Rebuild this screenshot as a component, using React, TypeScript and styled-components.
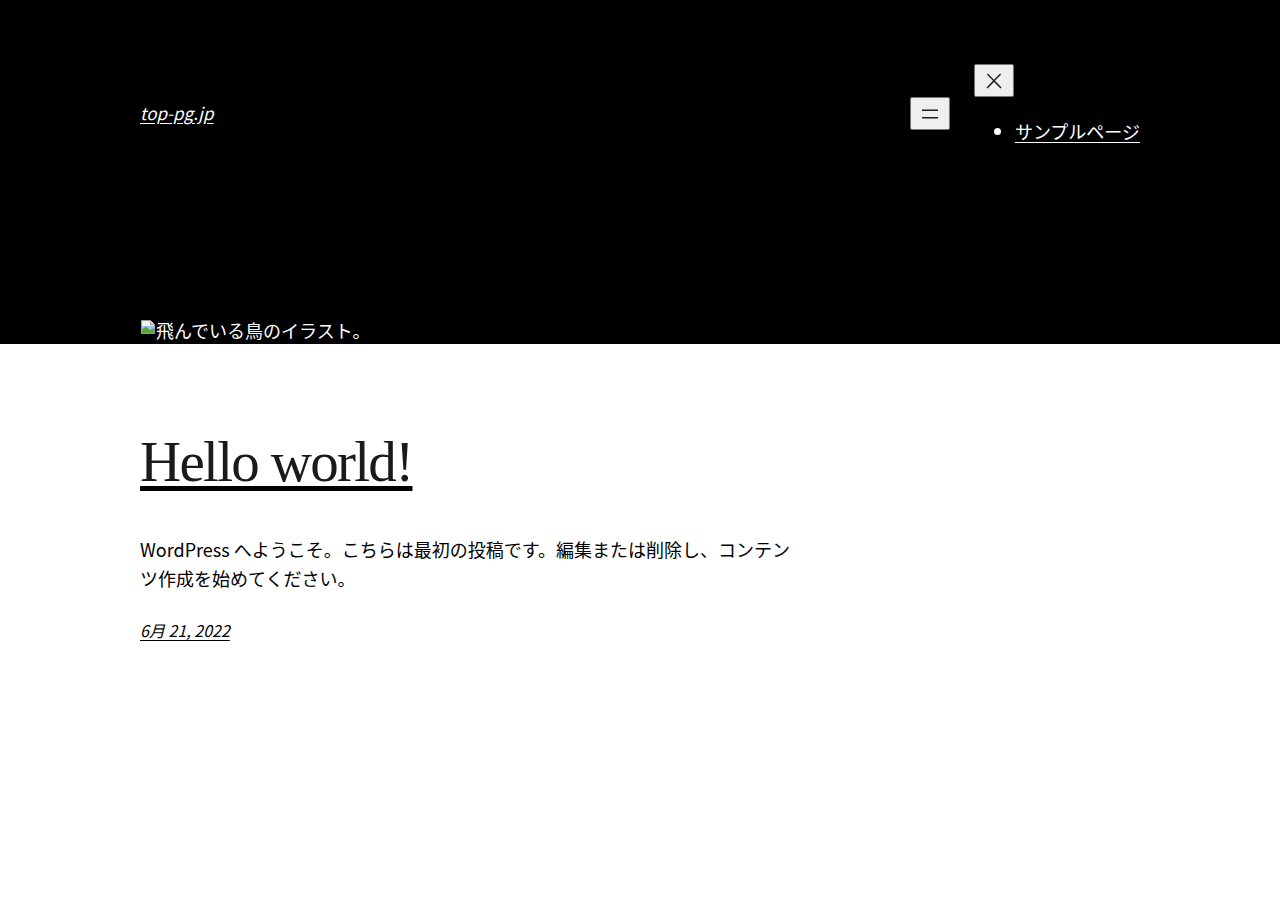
import React from "react";
import styled, { createGlobalStyle } from "styled-components";

const GlobalStyle = createGlobalStyle`
    html, body {
        margin: 0;
        padding: 0;
        background: #ffffff;
    }
    body {
        font-family: "Noto Sans CJK JP", "Noto Sans", sans-serif;
        color: #000000;
    }
`;

const App = () => {
    return (
        <>
            <GlobalStyle />
            <Header>
                <Container>
                    <TopRow>
                        <SiteTitle href="#">top-pg.jp</SiteTitle>
                        <NavArea>
                            <IconButton $mt={33} aria-label="メニューを開く">
                                <svg width="24" height="24" viewBox="0 0 24 24">
                                    <rect x="4" y="7.5" width="16" height="1.5" fill="#1e1e1e" />
                                    <rect x="4" y="15" width="16" height="1.5" fill="#1e1e1e" />
                                </svg>
                            </IconButton>
                            <NavModal>
                                <IconButton $mt={0} aria-label="メニューを閉じる">
                                    <svg width="24" height="24" viewBox="0 0 24 24">
                                        <path
                                            d="M13 11.8l6.1-6.3-1-1-6.1 6.2-6.1-6.2-1 1 6.1 6.3-6.5 6.7 1 1 6.5-6.6 6.5 6.6 1-1z"
                                            fill="#1e1e1e"
                                        />
                                    </svg>
                                </IconButton>
                                <NavList>
                                    <li>
                                        <NavLink href="#">サンプルページ</NavLink>
                                    </li>
                                </NavList>
                            </NavModal>
                        </NavArea>
                    </TopRow>
                    <BrokenImage>
                        <svg width="16" height="16" viewBox="0 0 16 16">
                            <path d="M1.5 1.5h9l4 4v9h-13z" fill="#f2f2f2" stroke="#9a9a9a" />
                            <path d="M10.5 1.5v4h4" fill="#dcdcdc" stroke="#9a9a9a" />
                            <rect x="2" y="7" width="12" height="4" fill="#9fc6ef" />
                            <path d="M2 14V10.5l4-3 4 3.5 4-2V14z" fill="#5aa83c" />
                        </svg>
                        <span>飛んでいる鳥のイラスト。</span>
                    </BrokenImage>
                </Container>
            </Header>
            <Main>
                <Container>
                    <PostTitle>
                        <a href="#">Hello world!</a>
                    </PostTitle>
                    <Excerpt>
                        WordPress へようこそ。こちらは最初の投稿です。編集または削除し、コンテンツ作成を始めてください。
                    </Excerpt>
                    <PostDate href="#">6月 21, 2022</PostDate>
                </Container>
            </Main>
        </>
    );
};

export default App;

const Header = styled.header`
    background: #000000;
    color: #ffffff;
    height: 344px;
`;

const Container = styled.div`
    width: 1000px;
    margin: 0 auto;
    height: 100%;
    display: flex;
    flex-direction: column;
`;

const TopRow = styled.div`
    display: flex;
    justify-content: space-between;
    align-items: flex-start;
    padding-top: 64px;
`;

const SiteTitle = styled.a`
    margin-top: 35px;
    font-size: 17px;
    line-height: 28px;
    font-style: italic;
    color: #ffffff;
    text-decoration: underline;
    text-underline-offset: 3px;
`;

const NavArea = styled.nav`
    display: flex;
    align-items: flex-start;
    gap: 25px;
`;

const IconButton = styled.button<{ $mt: number }>`
    margin-top: ${(p) => p.$mt}px;
    width: 40px;
    height: 33px;
    padding: 0;
    display: flex;
    align-items: center;
    justify-content: center;
    background: #efefef;
    border: 1px solid #767676;
    border-radius: 2px;
`;

const NavModal = styled.div`
    display: flex;
    flex-direction: column;
    align-items: flex-start;
    margin-left: -1px;
`;

const NavList = styled.ul`
    margin: 20px 0 0;
    padding-left: 41px;
    font-size: 18px;
    line-height: 29px;
`;

const NavLink = styled.a`
    color: #ffffff;
    text-decoration: underline;
    text-underline-offset: 3px;
`;

const BrokenImage = styled.div`
    margin-top: auto;
    display: flex;
    align-items: flex-start;
    font-size: 18px;
    line-height: 27px;
    color: #ffffff;
    svg {
        margin-top: 2px;
    }
`;

const Main = styled.main`
    padding-top: 84px;
`;

const PostTitle = styled.h2`
    margin: 0;
    font-family: "Liberation Serif", "DejaVu Serif", serif;
    font-weight: 400;
    font-size: 57px;
    line-height: 1.2;
    letter-spacing: -1.7px;
    a {
        color: #1a1a1a;
        text-decoration: underline;
        text-decoration-color: #000000;
        text-decoration-thickness: 5px;
        text-underline-offset: 5px;
    }
`;

const Excerpt = styled.p`
    max-width: 650px;
    margin: 39px 0 0;
    font-size: 18px;
    line-height: 29px;
`;

const PostDate = styled.a`
    align-self: flex-start;
    margin-top: 25px;
    font-size: 16px;
    line-height: 24px;
    font-style: italic;
    color: #000000;
    text-decoration: underline;
    text-underline-offset: 3px;
`;
